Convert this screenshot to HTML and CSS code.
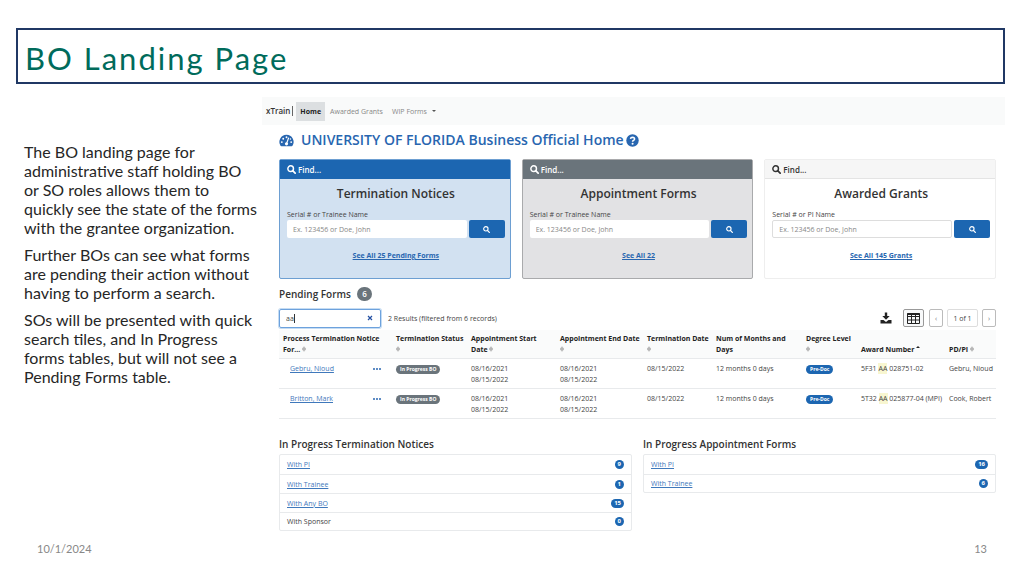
FILE: index.html
```html
<!DOCTYPE html>
<html lang="en">
<head>
<meta charset="utf-8">
<title>BO Landing Page</title>
<link rel="stylesheet" href="styles.css">
</head>
<body>
<svg class="defs" aria-hidden="true">
  <symbol id="search" viewBox="0 0 16 16"><circle cx="6.5" cy="6.5" r="5" fill="none" stroke="currentColor" stroke-width="2.6"/><path d="M10.5 10.5L14.5 14.5" stroke="currentColor" stroke-width="3" stroke-linecap="round"/></symbol>
  <symbol id="sort" viewBox="0 0 8 12"><path d="M1 5L4 1.500L7 5ZM1 7L4 10.500L7 7Z" fill="none" stroke="currentColor" stroke-width="1.200"/></symbol>
</svg>
<header class="title-box"><h1>BO Landing Page</h1></header>
<main class="slide">
  <section class="notes">
    <p>The BO landing page for<br>administrative staff holding BO<br>or SO roles allows them to<br>quickly see the state of the forms<br>with the grantee organization.</p>
    <p>Further BOs can see what forms are pending their action without having to perform a search.</p>
    <p>SOs will be presented with quick search tiles, and In Progress forms tables, but will not see a Pending Forms table.</p>
  </section>
  <section class="app">
    <nav class="navbar">
      <span class="brand">xTrain</span>
      <a class="nav-link active" href="#">Home</a>
      <a class="nav-link" href="#">Awarded Grants</a>
      <button class="nav-link" type="button">WIP Forms <span class="caret"></span></button>
    </nav>
    <div class="content">
      <h2 class="page-title">
        <svg class="gauge" viewBox="0 0 16 13" aria-hidden="true"><path d="M8 .5A7.500 7.500 0 0 0 1.600 12Q1.900 12.500 2.500 12.500H13.500Q14.100 12.500 14.400 12A7.500 7.500 0 0 0 8 .5Z" fill="currentColor"/><g fill="#fff"><circle cx="3" cy="8.200" r="1"/><circle cx="4.500" cy="4.600" r="1"/><circle cx="8" cy="3" r="1"/><circle cx="13" cy="8.200" r="1"/><circle cx="12.200" cy="5" r=".8"/><circle cx="8" cy="10" r="1.700"/></g><path d="M8 10L10.200 3.800" stroke="#fff" stroke-width="1.200" stroke-linecap="round"/></svg>
        <span>UNIVERSITY OF FLORIDA Business Official Home</span>
        <svg class="help" viewBox="0 0 14 14" role="img" aria-label="Help"><circle cx="7" cy="7" r="6.700" fill="currentColor"/><path d="M4.800 5.300Q5.100 3.500 7 3.500Q9.200 3.600 9.200 5.300Q9.200 6.300 8 6.900Q7.100 7.300 7.100 8.300" fill="none" stroke="#fff" stroke-width="1.700"/><circle cx="7.100" cy="10.500" r="1.100" fill="#fff"/></svg>
      </h2>
      <div class="cards">
        <form class="card card-blue">
          <div class="card-head"><svg class="icon" aria-hidden="true"><use href="#search"/></svg>Find...</div>
          <div class="card-body">
            <h3>Termination Notices</h3>
            <label for="term">Serial # or Trainee Name</label>
            <div class="search-row"><input id="term" type="text" placeholder="Ex. 123456 or Doe, John"><button type="button" aria-label="Search"><svg class="icon-small"><use href="#search"/></svg></button></div>
            <a class="see-all" href="#">See All 25 Pending Forms</a>
          </div>
        </form>
        <form class="card card-gray">
          <div class="card-head"><svg class="icon" aria-hidden="true"><use href="#search"/></svg>Find...</div>
          <div class="card-body">
            <h3>Appointment Forms</h3>
            <label for="appt">Serial # or Trainee Name</label>
            <div class="search-row"><input id="appt" type="text" placeholder="Ex. 123456 or Doe, John"><button type="button" aria-label="Search"><svg class="icon-small"><use href="#search"/></svg></button></div>
            <a class="see-all" href="#">See All 22</a>
          </div>
        </form>
        <form class="card card-plain">
          <div class="card-head"><svg class="icon" aria-hidden="true"><use href="#search"/></svg>Find...</div>
          <div class="card-body">
            <h3>Awarded Grants</h3>
            <label for="grant">Serial # or PI Name</label>
            <div class="search-row"><input id="grant" type="text" placeholder="Ex. 123456 or Doe, John"><button type="button" aria-label="Search"><svg class="icon-small"><use href="#search"/></svg></button></div>
            <a class="see-all" href="#">See All 145 Grants</a>
          </div>
        </form>
      </div>
      <h3 class="section-title pending-title">Pending Forms <span class="count">6</span></h3>
      <div class="toolbar">
        <div class="filter"><input type="text" value="aa" aria-label="Filter pending forms"><span class="cursor"></span><button type="button" aria-label="Clear"><svg viewBox="0 0 6 6"><path d="M1 1L5 5M5 1L1 5" stroke="currentColor" stroke-width="1.200"/></svg></button></div>
        <span class="results">2 Results (filtered from 6 records)</span>
        <button class="download" type="button" aria-label="Download"><svg viewBox="0 0 12 12"><path d="M4.800 .5H7.200V4H9.700L6 7.700L2.300 4H4.800ZM.5 8H3.500L6 10L8.500 8H11.500V11.500H.5Z" fill="currentColor"/></svg></button>
        <button class="tool columns" type="button" aria-label="Columns"><svg viewBox="0 0 13 11"><path d="M.5 .5H12.500V10.500H.5ZM.5 3.500H12.500M.5 7H12.500M4.500 .5V10.500M8.500 .5V10.500" fill="none" stroke="currentColor"/><path d="M.5 1H12.500" stroke="currentColor" stroke-width="2"/></svg></button>
        <button class="tool step" type="button" aria-label="Previous page">‹</button>
        <span class="tool pages">1 of 1</span>
        <button class="tool step" type="button" aria-label="Next page">›</button>
      </div>
      <table>
        <colgroup><col class="c-name"><col class="c-status"><col class="c-start"><col class="c-end"><col class="c-term"><col class="c-num"><col class="c-degree"><col class="c-award"><col></colgroup>
        <thead><tr>
          <th>Process Termination Notice<br>For... <svg class="sort"><use href="#sort"/></svg></th>
          <th>Termination Status<br><svg class="sort"><use href="#sort"/></svg></th>
          <th>Appointment Start<br>Date <svg class="sort"><use href="#sort"/></svg></th>
          <th>Appointment End Date<br><svg class="sort"><use href="#sort"/></svg></th>
          <th>Termination Date<br><svg class="sort"><use href="#sort"/></svg></th>
          <th>Num of Months and<br>Days</th>
          <th>Degree Level<br><svg class="sort"><use href="#sort"/></svg></th>
          <th>Award Number <span class="asc"></span></th>
          <th>PD/PI <svg class="sort"><use href="#sort"/></svg></th>
        </tr></thead>
        <tbody>
          <tr>
            <td><div class="name"><a href="#">Gebru, Nioud</a><button type="button" aria-label="Actions"><i></i><i></i><i></i></button></div></td>
            <td><span class="badge gray">In Progress BO</span></td>
            <td>08/16/2021<br>08/15/2022</td><td>08/16/2021<br>08/15/2022</td><td>08/15/2022</td><td>12 months 0 days</td>
            <td><span class="badge">Pre-Doc</span></td>
            <td>5F31 <mark>AA</mark> 028751-02</td><td>Gebru, Nioud</td>
          </tr>
          <tr>
            <td><div class="name"><a href="#">Britton, Mark</a><button type="button" aria-label="Actions"><i></i><i></i><i></i></button></div></td>
            <td><span class="badge gray">In Progress BO</span></td>
            <td>08/16/2021<br>08/15/2022</td><td>08/16/2021<br>08/15/2022</td><td>08/15/2022</td><td>12 months 0 days</td>
            <td><span class="badge">Pre-Doc</span></td>
            <td>5T32 <mark>AA</mark> 025877-04 (MPI)</td><td>Cook, Robert</td>
          </tr>
        </tbody>
      </table>
      <div class="progress">
        <section>
          <h3 class="section-title">In Progress Termination Notices</h3>
          <ul>
            <li><a href="#">With PI</a><span class="badge">9</span></li>
            <li><a href="#">With Trainee</a><span class="badge">1</span></li>
            <li><a href="#">With Any BO</a><span class="badge">15</span></li>
            <li><span>With Sponsor</span><span class="badge">0</span></li>
          </ul>
        </section>
        <section>
          <h3 class="section-title">In Progress Appointment Forms</h3>
          <ul>
            <li><a href="#">With PI</a><span class="badge">16</span></li>
            <li><a href="#">With Trainee</a><span class="badge">6</span></li>
          </ul>
        </section>
      </div>
    </div>
  </section>
</main>
<footer><span>10/1/2024</span><span>13</span></footer>
</body>
</html>
```
FILE: styles.css
```css
* { box-sizing: border-box; }
body { margin: 0; padding: 28px 19px 0 16px; background: #fff; color: #262626; font-family: Lato, "Liberation Sans", sans-serif; }
h1, h2, h3, p, ul { margin: 0; padding: 0; }
button, input { font: inherit; color: inherit; margin: 0; padding: 0; border: 0; background: none; }
a { color: #3f78bb; }
svg { display: block; }
.defs { display: none; }
.title-box { border: 2px solid #203864; padding: 10px 7px 6px; }
h1 { color: #006b5b; font-size: 31px; line-height: 36px; font-weight: 400; letter-spacing: 2px; }
.slide { display: grid; grid-template-columns: 246px 1fr; padding-top: 13px; }
.notes { padding: 45px 0 0 8px; font-size: 16px; line-height: 19px; }
.notes p { margin-bottom: 8px; }
.app { font-family: "Open Sans", "Noto Sans", sans-serif; font-size: 7px; line-height: 11px; color: #444; }
.navbar { display: flex; align-items: center; height: 28px; padding-left: 4px; background: #f9fafa; }
.brand { font-size: 8px; font-weight: 600; color: #333; padding-right: 2px; margin-right: 3px; border-right: 1px solid #666; line-height: 10px; }
.nav-link { padding: 4px 5px 4px 4px; color: #888; text-decoration: none; }
.active { background: #dcdfe1; color: #222; font-weight: 700; margin-right: 1px; padding: 4px; }
.caret { display: inline-block; border: 2px solid transparent; border-top-color: #555; border-bottom: 0; margin: 0 0 2px 3px; }
.content { padding: 0 9px 0 17px; }
.page-title { display: flex; align-items: center; gap: 7px; height: 34px; padding-bottom: 4px; font-size: 14px; font-weight: 600; color: #2866b0; line-height: 20px; }
.gauge { width: 15px; height: 13px; }
.help { width: 13px; height: 13px; margin-left: -5px; }
.cards { display: grid; grid-template-columns: 1fr 1fr 1fr; gap: 11px; }
.card { border: 1px solid #6d9fd2; border-radius: 2px; background: #d2e1f1; height: 120px; }
.card-head { display: flex; align-items: center; gap: 2px; height: 19px; padding-left: 7px; background: #1c66b1; color: #fff; font-size: 8px; font-weight: 600; }
.card-gray { border-color: #a9aaac; background: #e2e2e4; }
.card-gray .card-head { background: #6a747b; }
.card-plain { border-color: #eee; background: #fff; }
.card-plain .card-head { background: #f6f6f6; color: #333; border-bottom: 1px solid #e4e4e4; }
.icon { width: 9px; height: 9px; }
.icon-small { width: 7px; height: 7px; }
.card-body { display: flex; flex-direction: column; padding: 7px 5px 0 7px; }
.card h3 { text-align: center; font-size: 12px; line-height: 16px; font-weight: 600; color: #333; }
.card label { margin-top: 7px; line-height: 11px; }
.search-row { display: flex; gap: 2px; height: 18px; }
.search-row input { flex: 1; min-width: 0; background: #fff; border-radius: 2px; padding-left: 6px; }
.search-row input::placeholder { color: #888; opacity: 1; }
.card-plain input { border: 1px solid #ddd; }
.search-row button { display: grid; place-items: center; width: 36px; border-radius: 2px; background: #1c66b1; color: #fff; }
.see-all { align-self: center; margin-top: 12px; font-weight: 700; color: #2866b0; }
.section-title { font-size: 10px; line-height: 14px; font-weight: 600; color: #333; }
.pending-title { display: flex; align-items: center; gap: 6px; height: 29px; }
.count { width: 15px; height: 14px; border-radius: 7px; background: #6a747b; color: #fff; font-size: 8px; text-align: center; }
.toolbar { display: flex; align-items: center; height: 20px; margin-bottom: 2px; }
.filter { display: flex; align-items: center; width: 102px; height: 19px; border: 1px solid #6da2dd; border-radius: 2px; box-shadow: 0 0 0 1px #c5dcf3; padding: 0 7px 0 6px; }
.filter input { width: 8px; outline: 0; }
.cursor { width: 1px; height: 9px; background: #333; }
.filter button { margin-left: auto; width: 6px; color: #234fa2; }
.results { margin: 0 auto 0 7px; }
.download { width: 12px; color: #222; margin-right: 7px; }
.tool { display: grid; place-items: center; height: 18px; border: 1px solid #ddd; border-radius: 2px; margin-left: 4px; }
.columns { width: 21px; border-color: #999; color: #222; background: #f8f9fa; margin-right: 1px; }
.columns svg { width: 13px; }
.step { width: 14px; border-color: #bbb; color: #777; }
.pages { width: 31px; }
table { width: 100%; table-layout: fixed; border-collapse: collapse; }
.c-name { width: 113px; } .c-status { width: 75px; } .c-start { width: 89px; } .c-end { width: 87px; } .c-term { width: 69px; } .c-num { width: 90px; } .c-degree { width: 55px; } .c-award { width: 88px; }
th, td { padding: 4px 0 3px 4px; text-align: left; white-space: nowrap; border-bottom: 1px solid #e8eaec; }
th { background: #fafbfb; color: #222; vertical-align: bottom; font-weight: 700; padding: 3px 0 3px 4px; }
td { vertical-align: top; }
.sort { display: inline-block; width: 4px; height: 6px; color: #888; }
.asc { display: inline-block; border: 2px solid transparent; border-bottom-color: #222; border-top: 0; margin-bottom: 4px; }
.name { display: flex; align-items: center; justify-content: space-between; padding: 0 10px 0 7px; }
.name button { display: flex; gap: 0; }
.name i { width: 2px; height: 2px; border-radius: 1px; background: #2866b0; margin-right: 1px; }
.badge { display: inline-block; padding: 0 4px; border-radius: 5px; background: #1c66b1; color: #fff; font-size: 5px; font-weight: 700; line-height: 9px; }
.gray { background: #6a747b; }
mark { background: #f8f6d0; color: inherit; padding: 1px 0; }
.progress { display: grid; grid-template-columns: 1fr 1fr; gap: 11px; padding-top: 18px; }
.progress ul { list-style: none; margin-top: 3px; border: 1px solid #e8eaec; border-radius: 2px; }
.progress li { display: flex; align-items: center; justify-content: space-between; height: 19px; padding: 0 7px; }
.progress li:last-child { height: 18px; }
.progress .badge { font-size: 6px; padding: 0 3px; }
.progress li + li { border-top: 1px solid #e8eaec; }
footer { display: flex; justify-content: space-between; padding: 10px 18px 0 21px; font-size: 11px; line-height: 16px; color: #888; }
```
